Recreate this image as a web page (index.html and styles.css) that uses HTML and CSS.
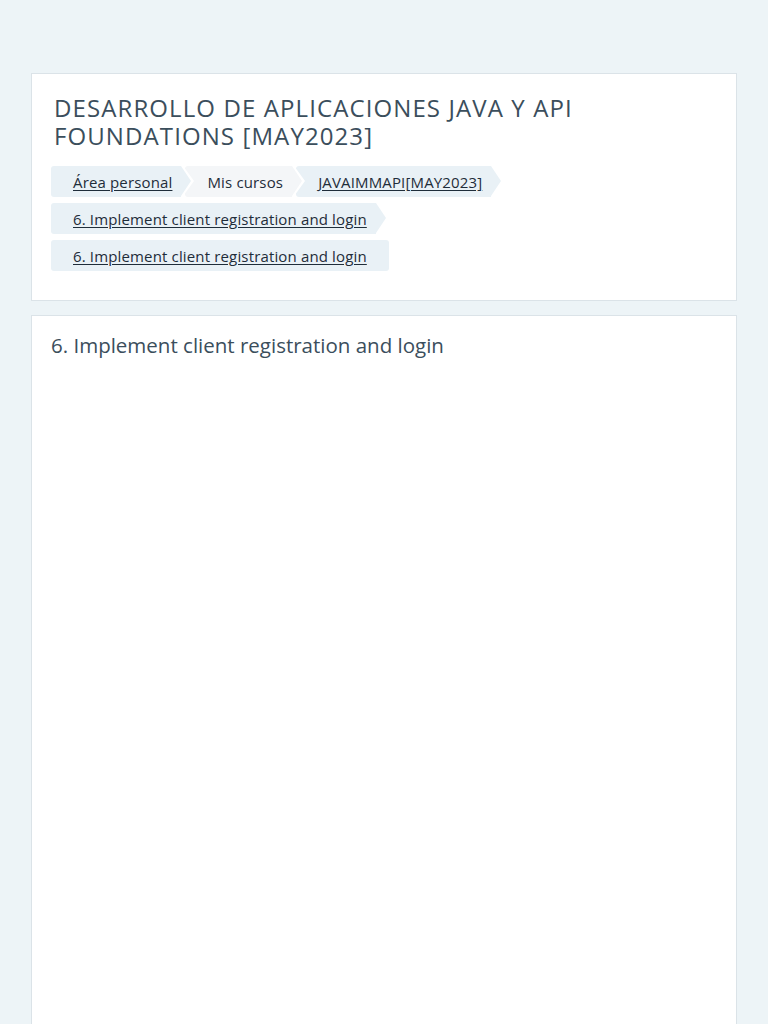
FILE: index.html
```html
<!DOCTYPE html>
<html lang="es">
<head>
<meta charset="utf-8">
<title>DESARROLLO DE APLICACIONES JAVA Y API FOUNDATIONS [MAY2023]</title>
<link rel="stylesheet" href="styles.css">
</head>
<body>
<div class="page">
  <header class="card header-card">
    <h1 class="page-title">DESARROLLO DE APLICACIONES JAVA Y API FOUNDATIONS [MAY2023]</h1>
    <nav class="crumbs">
      <ol class="crumb-list">
        <li class="crumb"><a href="#">Área personal</a></li>
        <li class="crumb crumb-plain"><span>Mis cursos</span></li>
        <li class="crumb"><a href="#">JAVAIMMAPI[MAY2023]</a></li>
        <li class="crumb"><a href="#">6. Implement client registration and login</a></li>
        <li class="crumb crumb-last"><a href="#">6. Implement client registration and login</a></li>
      </ol>
    </nav>
  </header>
  <main class="card main-card">
    <h2 class="section-title">6. Implement client registration and login</h2>
  </main>
</div>
</body>
</html>
```
FILE: styles.css
```css
html, body {
  margin: 0;
  padding: 0;
  background: #edf4f7;
}
body {
  font-family: "Open Sans", "Noto Sans", sans-serif;
  color: #3d4f5d;
}
.page {
  padding: 73px 31px 0;
  display: flex;
  flex-direction: column;
  gap: 14px;
}
.card {
  background: #ffffff;
  border: 1px solid #dbe3e8;
}
.header-card {
  padding: 20px 19px 29px;
}
.page-title {
  margin: 0 0 16px 3px;
  font-size: 24px;
  font-weight: 400;
  line-height: 28px;
  color: #3b4e5c;
  letter-spacing: 1.1px;
}
.crumb-list {
  list-style: none;
  margin: 0;
  padding: 0;
  display: flex;
  flex-wrap: wrap;
  gap: 6px 4px;
}
.crumb {
  position: relative;
  height: 31px;
  display: flex;
  align-items: center;
  padding: 0 9px 0 22px;
  background: #e9f1f6;
  font-size: 15px;
  letter-spacing: 0.15px;
  border-radius: 3px 0 0 3px;
}
.crumb a {
  color: #1f2d3a;
  text-decoration: underline;
  text-underline-offset: 2px;
}
.crumb span {
  color: #1f2d3a;
}
.crumb-plain {
  background: #f4f6f8;
}
.crumb::before,
.crumb::after {
  content: "";
  position: absolute;
  top: 0;
  width: 0;
  height: 0;
  z-index: 1;
}
.crumb::before {
  left: 100%;
  top: -3px;
  border-top: 18.5px solid transparent;
  border-bottom: 18.5px solid transparent;
  border-left: 13px solid #ffffff;
}
.crumb::after {
  left: 100%;
  border-top: 15.5px solid transparent;
  border-bottom: 15.5px solid transparent;
  border-left: 10px solid #e9f1f6;
  z-index: 2;
}
.crumb-plain::after {
  border-left-color: #f4f6f8;
}
.crumb-last {
  padding-right: 22px;
  border-radius: 3px;
}
.crumb-last::before,
.crumb-last::after {
  display: none;
}
.main-card {
  min-height: 760px;
  padding: 17px 19px;
}
.section-title {
  margin: 0;
  font-size: 20.5px;
  font-weight: 400;
  line-height: 24px;
  color: #3b4e5c;
}
```
